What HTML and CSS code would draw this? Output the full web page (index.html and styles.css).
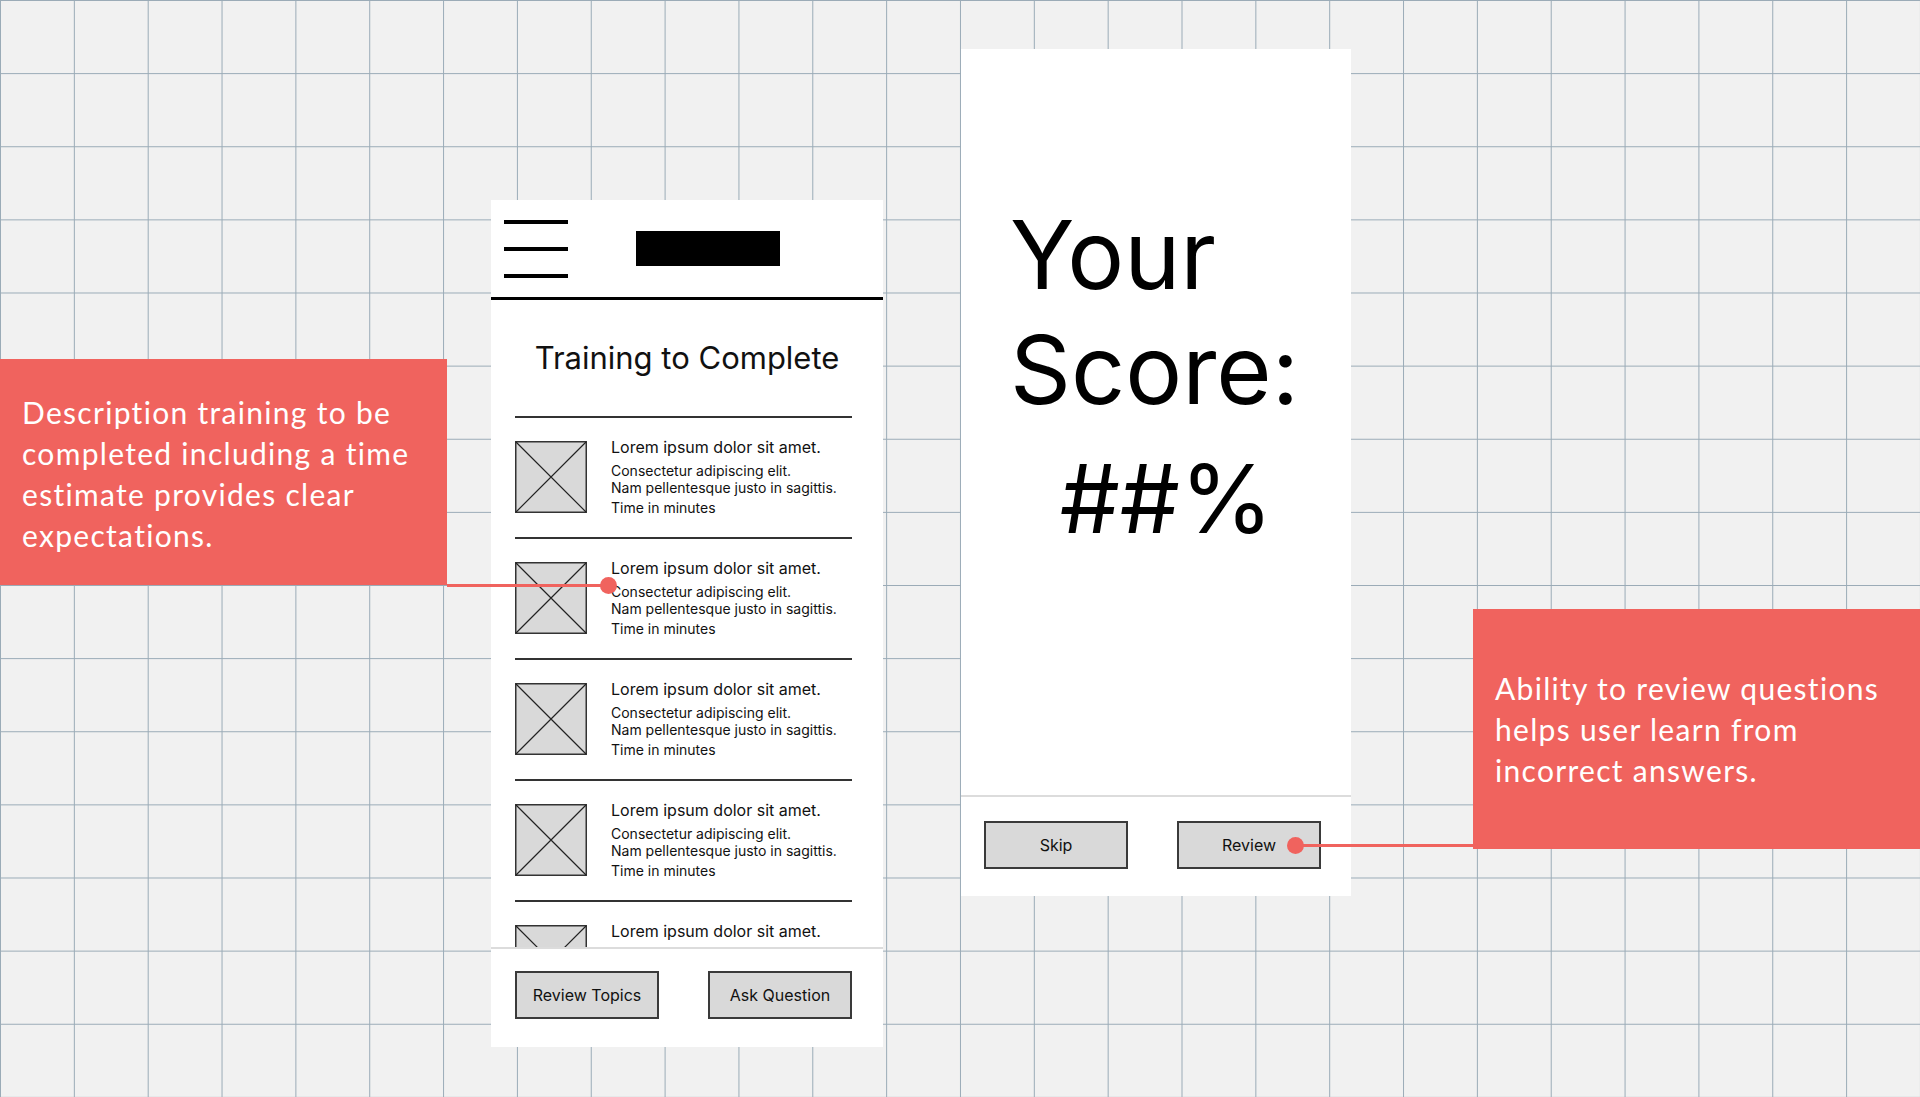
FILE: index.html
```html
<!DOCTYPE html>
<html>
<head>
  <meta charset="utf-8">
  <title>Training flow</title>
  <link rel="stylesheet" href="styles.css">
</head>
<body>
  <div class="board">

    <section class="phone phone-training">
      <header class="app-bar">
        <div class="menu-icon"><span></span><span></span><span></span></div>
        <div class="logo-block"></div>
      </header>
      <div class="training-body">
        <h1 class="screen-title">Training to Complete</h1>
        <ul class="course-list">
          <li class="course">
            <svg class="thumb" viewBox="0 0 72 72"><rect x="0.75" y="0.75" width="70.5" height="70.5"/><path d="M1 1L71 71M71 1L1 71"/></svg>
            <div class="course-text">
              <div class="course-name">Lorem ipsum dolor sit amet.</div>
              <div class="course-desc">Consectetur adipiscing elit.<br>Nam pellentesque justo in sagittis.</div>
              <div class="course-time">Time in minutes</div>
            </div>
          </li>
          <li class="course">
            <svg class="thumb" viewBox="0 0 72 72"><rect x="0.75" y="0.75" width="70.5" height="70.5"/><path d="M1 1L71 71M71 1L1 71"/></svg>
            <div class="course-text">
              <div class="course-name">Lorem ipsum dolor sit amet.</div>
              <div class="course-desc">Consectetur adipiscing elit.<br>Nam pellentesque justo in sagittis.</div>
              <div class="course-time">Time in minutes</div>
            </div>
          </li>
          <li class="course">
            <svg class="thumb" viewBox="0 0 72 72"><rect x="0.75" y="0.75" width="70.5" height="70.5"/><path d="M1 1L71 71M71 1L1 71"/></svg>
            <div class="course-text">
              <div class="course-name">Lorem ipsum dolor sit amet.</div>
              <div class="course-desc">Consectetur adipiscing elit.<br>Nam pellentesque justo in sagittis.</div>
              <div class="course-time">Time in minutes</div>
            </div>
          </li>
          <li class="course">
            <svg class="thumb" viewBox="0 0 72 72"><rect x="0.75" y="0.75" width="70.5" height="70.5"/><path d="M1 1L71 71M71 1L1 71"/></svg>
            <div class="course-text">
              <div class="course-name">Lorem ipsum dolor sit amet.</div>
              <div class="course-desc">Consectetur adipiscing elit.<br>Nam pellentesque justo in sagittis.</div>
              <div class="course-time">Time in minutes</div>
            </div>
          </li>
          <li class="course">
            <svg class="thumb" viewBox="0 0 72 72"><rect x="0.75" y="0.75" width="70.5" height="70.5"/><path d="M1 1L71 71M71 1L1 71"/></svg>
            <div class="course-text">
              <div class="course-name">Lorem ipsum dolor sit amet.</div>
              <div class="course-desc">Consectetur adipiscing elit.<br>Nam pellentesque justo in sagittis.</div>
              <div class="course-time">Time in minutes</div>
            </div>
          </li>
        </ul>
      </div>
      <footer class="action-bar">
        <button class="btn">Review Topics</button>
        <button class="btn">Ask Question</button>
      </footer>
    </section>

    <section class="phone phone-score">
      <div class="score">
        <p class="score-label">Your<br>Score:</p>
        <p class="score-value">##%</p>
      </div>
      <footer class="action-bar">
        <button class="btn">Skip</button>
        <button class="btn">Review</button>
      </footer>
    </section>

    <aside class="callout callout-left">
      <p>Description training to be<br>completed including a time<br>estimate provides clear<br>expectations.</p>
    </aside>
    <aside class="callout callout-right">
      <p>Ability to review questions<br>helps user learn from<br>incorrect answers.</p>
    </aside>

    <div class="pointer pointer-left"></div>
    <div class="pointer pointer-right"></div>
  </div>
</body>
</html>
```

FILE: styles.css
```css
html, body {
  margin: 0;
  padding: 0;
}

body {
  font-family: Inter, "Liberation Sans", sans-serif;
  color: #111;
}

/* drawing board with the light blue grid */
.board {
  position: relative;
  width: 1920px;
  height: 1097px;
  overflow: hidden;
  background-color: #f1f1f1;
  background-image:
    linear-gradient(to right, #9aabb7 1px, transparent 1px),
    linear-gradient(to bottom, #9aabb7 1px, transparent 1px);
  background-size: 73.846px 73.133px;
}

.phone {
  position: absolute;
  display: flex;
  flex-direction: column;
  background: #fff;
  box-sizing: border-box;
}

.phone-training {
  left: 491px;
  top: 200px;
  width: 392px;
  height: 847px;
}

.phone-score {
  left: 961px;
  top: 49px;
  width: 390px;
  height: 847px;
}

/* top app bar */
.app-bar {
  display: flex;
  align-items: center;
  height: 100px;
  padding-left: 13px;
  border-bottom: 3px solid #000;
  box-sizing: border-box;
  flex-shrink: 0;
}

.menu-icon {
  display: flex;
  flex-direction: column;
  gap: 23px;
  width: 64px;
}

.menu-icon span {
  display: block;
  height: 4px;
  background: #000;
}

.logo-block {
  width: 144px;
  height: 35px;
  margin-left: 68px;
  background: #000;
}

.training-body {
  flex: 1;
  overflow: hidden;
}

.screen-title {
  margin: 0;
  padding: 40px 0;
  font-size: 31px;
  font-weight: 400;
  line-height: 36px;
  text-align: center;
}

.course-list {
  list-style: none;
  margin: 0 31px 0 24px;
  padding: 0;
}

.course {
  display: flex;
  align-items: flex-start;
  gap: 24px;
  height: 121px;
  padding-top: 23px;
  box-sizing: border-box;
  border-top: 2px solid #333;
}

.thumb {
  width: 72px;
  height: 72px;
  flex-shrink: 0;
}

.thumb rect {
  fill: #d9d9d9;
  stroke: #333;
  stroke-width: 1.5;
}

.thumb path {
  stroke: #222;
  stroke-width: 1.2;
}

.course-text {
  margin-top: -3px;
}

.course-name {
  font-size: 16px;
  line-height: 19px;
}

.course-desc {
  margin-top: 5px;
  font-size: 14px;
  line-height: 17px;
}

.course-time {
  margin-top: 3px;
  font-size: 14px;
  line-height: 17px;
}

/* bottom buttons */
.action-bar {
  display: flex;
  justify-content: space-between;
  align-items: flex-start;
  height: 100px;
  padding: 22px 31px 0 24px;
  border-top: 2px solid #dcdcdc;
  box-sizing: border-box;
  flex-shrink: 0;
  background: #fff;
}

.phone-score .action-bar {
  height: 101px;
  padding: 24px 30px 0 23px;
}

.btn {
  width: 144px;
  height: 48px;
  padding: 0;
  background: #d9d9d9;
  border: 2px solid #3a3a3a;
  border-radius: 0;
  font-family: Inter, "Liberation Sans", sans-serif;
  font-size: 16px;
  color: #111;
}

/* score screen */
.score {
  flex: 1;
  padding: 148px 0 0 49px;
  font-size: 95px;
  line-height: 115px;
  color: #000;
}

.score p {
  margin: 0;
}

.score-value {
  margin-top: 14px !important;
  padding-right: 28px;
  text-align: center;
}

/* red annotation boxes */
.callout {
  position: absolute;
  display: flex;
  align-items: center;
  width: 447px;
  padding: 3px 22px 0;
  box-sizing: border-box;
  background: #f0635e;
  color: #fff;
  font-family: Lato, "Open Sans", sans-serif;
  font-size: 30px;
  line-height: 41px;
  letter-spacing: 1.3px;
}

.callout p {
  margin: 0;
}

.callout-left {
  left: 0;
  top: 359px;
  height: 226px;
}

.callout-right {
  left: 1473px;
  top: 609px;
  height: 240px;
  padding-top: 0;
}

.pointer {
  position: absolute;
  height: 3px;
  background: #f0635e;
}

.pointer::after {
  content: "";
  position: absolute;
  top: -7px;
  width: 17px;
  height: 17px;
  border-radius: 50%;
  background: #f0635e;
}

.pointer-left {
  left: 447px;
  top: 584px;
  width: 162px;
}

.pointer-left::after {
  right: -8px;
}

.pointer-right {
  left: 1295px;
  top: 844px;
  width: 178px;
}

.pointer-right::after {
  left: -8px;
}
```
